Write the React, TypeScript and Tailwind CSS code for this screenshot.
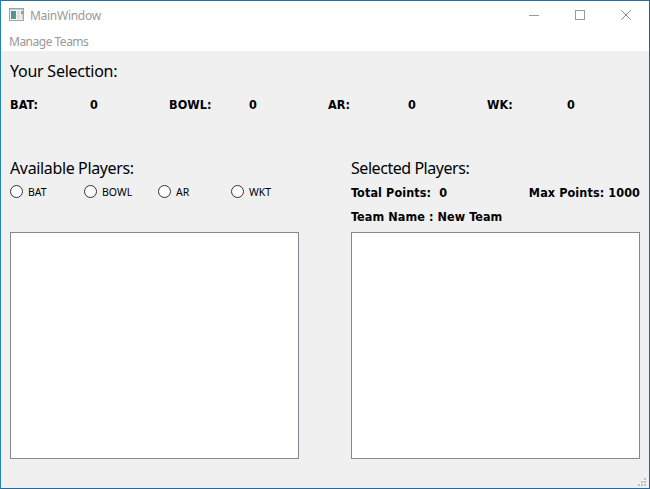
import React from "react";

const bold = "font-['DejaVu_Sans_Condensed','DejaVu_Sans',sans-serif] font-bold text-[12.5px] leading-4 whitespace-pre text-black";
const heading = "font-['Noto_Sans',sans-serif] text-[16px] leading-5 whitespace-nowrap text-black";

function AppIcon() {
  return (
    <svg width="15" height="13" viewBox="0 0 15 13" className="-mt-[3px]" shapeRendering="crispEdges">
      <defs>
        <linearGradient id="pane" x1="0" y1="0" x2="1" y2="1">
          <stop offset="0" stopColor="#4d8cad" />
          <stop offset="1" stopColor="#55a184" />
        </linearGradient>
      </defs>
      <rect x="0.5" y="0.5" width="14" height="12" fill="#f3f3f4" stroke="#a0a4aa" />
      <rect x="1" y="1" width="13" height="1" fill="#c5cbd3" />
      <rect x="2" y="3" width="5" height="8" fill="url(#pane)" />
      <rect x="8" y="3" width="3" height="8" fill="#dddfe3" />
      <rect x="12" y="3" width="2" height="3" fill="#79a99c" />
      <rect x="12" y="6" width="2" height="5" fill="#d8dce0" />
    </svg>
  );
}

function TitleBar() {
  return (
    <header className="flex h-[30px] items-center bg-white pl-2">
      <AppIcon />
      <span className="ml-[6px] font-['Noto_Sans',sans-serif] text-[12px] leading-4 tracking-[-0.28px] text-[#999999]">MainWindow</span>
      <div className="-mt-px ml-auto flex gap-[35px] pr-[17px]">
        <svg width="11" height="11" viewBox="0 0 11 11" shapeRendering="crispEdges">
          <path d="M0 5.5H10" stroke="#999" />
        </svg>
        <svg width="11" height="11" viewBox="0 0 11 11" shapeRendering="crispEdges">
          <rect x="0.5" y="0.5" width="9" height="9" fill="none" stroke="#999" />
        </svg>
        <svg width="11" height="11" viewBox="0 0 11 11">
          <path d="M0.3 0.3L9.7 9.7M9.7 0.3L0.3 9.7" stroke="#8c8c8c" />
        </svg>
      </div>
    </header>
  );
}

function Count({ name }: { name: string }) {
  return (
    <div className={`flex w-[159px] shrink-0 tracking-[0.1px] ${bold}`}>
      <span className="w-20">{name}</span>
      <span>0</span>
    </div>
  );
}

function Radio({ label, className }: { label: string; className: string }) {
  return (
    <label className={`flex items-center ${className}`}>
      <span className="size-[13px] rounded-full border border-[#333] bg-white" />
      <span className="ml-[5px] font-['Noto_Sans',sans-serif] text-[10.5px] leading-[14px] text-black">{label}</span>
    </label>
  );
}

function List() {
  return <div className="h-[227px] w-[289px] border border-[#828790] bg-white" />;
}

export default function App() {
  return (
    <div className="flex h-[489px] w-[650px] flex-col border border-t-[#2a6da0] border-r-[#2b5c94] border-b-[#29689b] border-l-[#2484ad] bg-[#f0f0f0]">
      <TitleBar />
      <nav className="h-5 bg-white pt-[3px] pl-2 font-['Noto_Sans',sans-serif] text-[12px] leading-4 tracking-[-0.5px] text-[#999999]">Manage Teams</nav>
      <main className="flex flex-col px-[9px] pt-[10px]">
        <h1 className={`tracking-[-0.25px] ${heading}`}>Your Selection:</h1>
        <div className="mt-4 flex">
          <Count name="BAT:" />
          <Count name="BOWL:" />
          <Count name="AR:" />
          <Count name="WK:" />
        </div>
        <div className="mt-[45px] flex justify-between">
          <section className="w-[289px]">
            <h2 className={`tracking-[-0.36px] ${heading}`}>Available Players:</h2>
            <div className="mt-[7px] mb-[34px] flex h-[13px] items-center">
              <Radio label="BAT" className="w-[74px]" />
              <Radio label="BOWL" className="w-[74px]" />
              <Radio label="AR" className="w-[73px]" />
              <Radio label="WKT" className="w-[60px]" />
            </div>
            <List />
          </section>
          <section className="w-[289px]">
            <h2 className={`tracking-[-0.45px] ${heading}`}>Selected Players:</h2>
            <div className={`mt-[7px] flex justify-between tracking-[0.1px] ${bold}`}>
              <span>Total Points:  0</span>
              <span>Max Points: 1000</span>
            </div>
            <div className={`mt-2 mb-[7px] tracking-[0.08px] ${bold}`}>Team Name : New Team</div>
            <List />
          </section>
        </div>
      </main>
      <svg className="mt-auto ml-auto mr-[3px] mb-[2px]" width="8" height="8" shapeRendering="crispEdges" fill="#bfbfbf">
        <path d="M6 0h2v2h-2zM3 3h2v2h-2zM6 3h2v2h-2zM0 6h2v2h-2zM3 6h2v2h-2zM6 6h2v2h-2z" />
      </svg>
    </div>
  );
}
